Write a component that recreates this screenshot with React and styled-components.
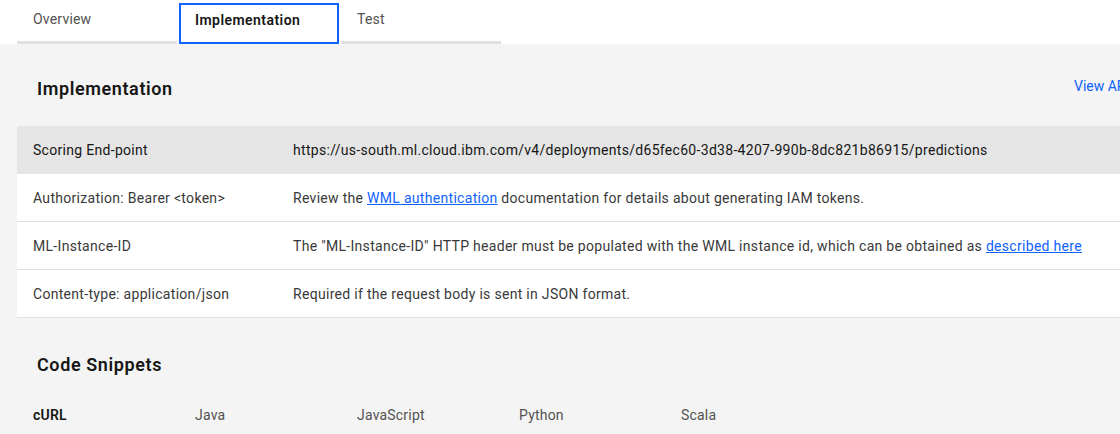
import styled, { createGlobalStyle } from 'styled-components';

const GlobalStyle = createGlobalStyle`
	html, body {
		margin: 0;
		padding: 0;
		background: #f4f4f4;
		font-family: Roboto, "Liberation Sans", sans-serif;
		color: #393939;
		overflow: hidden;
	}
`;

const Page = styled.div`
	width: 1120px;
	height: 434px;
	overflow: hidden;
	background: #f4f4f4;
`;

const TabBar = styled.div`
	display: flex;
	gap: 2px;
	padding: 0 0 0 17px;
	background: #fff;
	height: 44px;
`;

const Tab = styled.div`
	box-sizing: border-box;
	width: 160px;
	height: ${(p) => (p.$active ? '41px' : '44px')};
	margin-top: ${(p) => (p.$active ? '3px' : '0')};
	padding: ${(p) => (p.$active ? '1px 14px 0' : '5px 16px 0')};
	border-bottom: 3px solid #e0e0e0;
	font-size: 14px;
	line-height: 28px;
	color: ${(p) => (p.$active ? '#161616' : '#525252')};
	font-weight: ${(p) => (p.$active ? 600 : 400)};
	letter-spacing: ${(p) => (p.$active ? '0.45px' : '0.2px')};

	${(p) =>
		p.$active &&
		`
		border: 2px solid #0f62fe;
		background: #fff;
	`}
`;

const Content = styled.div`
	padding: 0 0 0 17px;
`;

const SectionHead = styled.div`
	display: flex;
	justify-content: space-between;
	align-items: center;
	box-sizing: border-box;
	height: 82px;
	padding: ${(p) => p.$pad || '6px 0 0 20px'};
`;

const Heading = styled.h2`
	margin: 0;
	font-size: 18px;
	font-weight: 600;
	color: #161616;
	letter-spacing: 0.6px;
`;

const ViewLink = styled.a`
	font-size: 14px;
	color: #0f62fe;
	text-decoration: none;
	white-space: nowrap;
	width: 46px;
	overflow: hidden;
	margin-top: -4px;
`;

const Table = styled.div`
	width: 1140px;
`;

const Row = styled.div`
	display: grid;
	grid-template-columns: 260px 1fr;
	height: 48px;
	box-sizing: border-box;
	align-items: center;
	padding-left: 16px;
	font-size: 14px;
	color: #393939;
	background: ${(p) => (p.$head ? '#e5e5e5' : '#fff')};
	border-bottom: 1px solid ${(p) => (p.$head ? '#e5e5e5' : '#e0e0e0')};
	white-space: nowrap;
	letter-spacing: 0.3px;
`;

const Cell = styled.div`
	color: ${(p) => (p.$dark ? '#161616' : '#393939')};
`;

const DocLink = styled.a`
	color: #0f62fe;
	text-decoration: underline;
`;

const SnippetHead = styled(SectionHead)`
	height: 92px;
`;

const LangTabs = styled.div`
	display: flex;
	padding-left: 16px;
	margin-top: -3px;
`;

const LangTab = styled.div`
	width: 162px;
	font-size: 14px;
	letter-spacing: 0.2px;
	color: ${(p) => (p.$active ? '#161616' : '#525252')};
	font-weight: ${(p) => (p.$active ? 600 : 400)};
`;

const rows = [
	{
		key: 'Scoring End-point',
		value: 'https://us-south.ml.cloud.ibm.com/v4/deployments/d65fec60-3d38-4207-990b-8dc821b86915/predictions',
		head: true,
	},
	{
		key: 'Authorization: Bearer <token>',
		value: (
			<>
				Review the <DocLink href="#">WML authentication</DocLink> documentation for details about generating IAM tokens.
			</>
		),
	},
	{
		key: 'ML-Instance-ID',
		value: (
			<>
				The "ML-Instance-ID" HTTP header must be populated with the WML instance id, which can be obtained as{' '}
				<DocLink href="#">described here</DocLink>
			</>
		),
	},
	{
		key: 'Content-type: application/json',
		value: 'Required if the request body is sent in JSON format.',
	},
];

const langs = ['cURL', 'Java', 'JavaScript', 'Python', 'Scala'];

export default function App() {
	return (
		<Page>
			<GlobalStyle />
			<TabBar>
				<Tab>Overview</Tab>
				<Tab $active>Implementation</Tab>
				<Tab>Test</Tab>
			</TabBar>
			<Content>
				<SectionHead>
					<Heading>Implementation</Heading>
					<ViewLink href="#">View API reference</ViewLink>
				</SectionHead>
				<Table>
					{rows.map((r) => (
						<Row key={r.key} $head={r.head}>
							<Cell $dark={r.head}>{r.key}</Cell>
							<Cell $dark={r.head}>{r.value}</Cell>
						</Row>
					))}
				</Table>
				<SnippetHead $pad="0 0 0 20px">
					<Heading>Code Snippets</Heading>
				</SnippetHead>
				<LangTabs>
					{langs.map((l, i) => (
						<LangTab key={l} $active={i === 0}>
							{l}
						</LangTab>
					))}
				</LangTabs>
			</Content>
		</Page>
	);
}
